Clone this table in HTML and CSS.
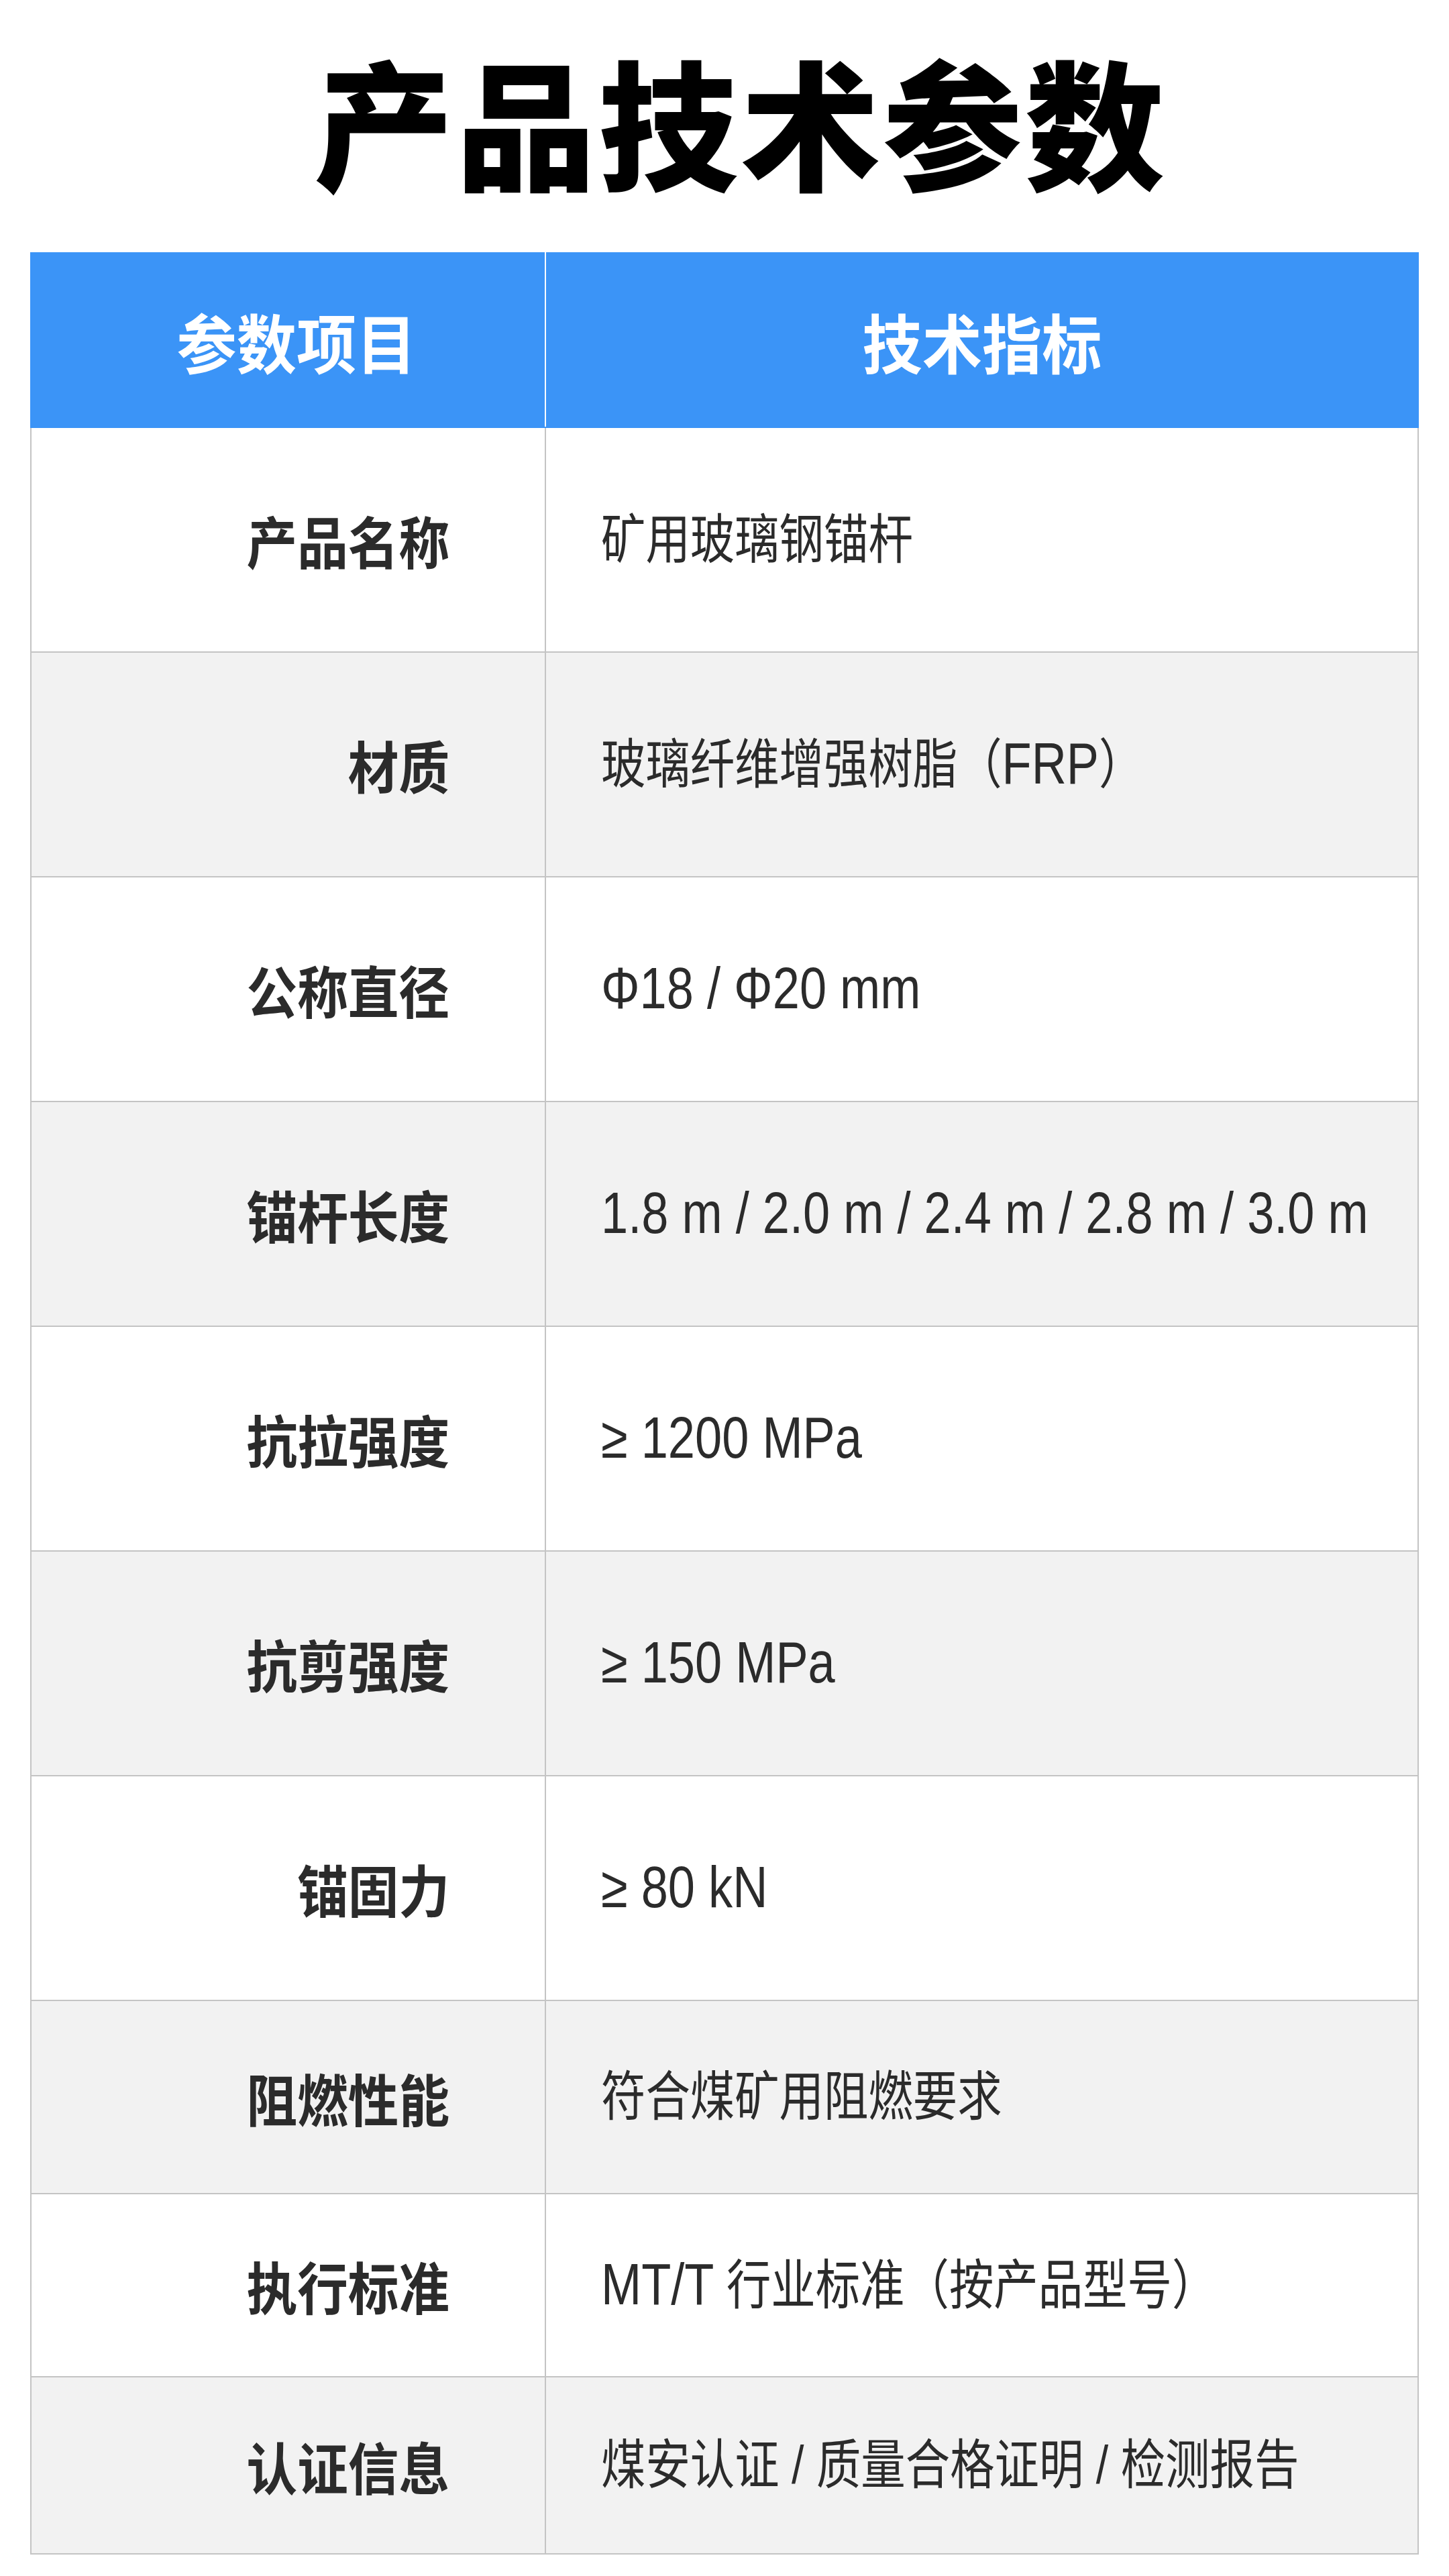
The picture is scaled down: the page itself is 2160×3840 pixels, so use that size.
FILE: index.html
```html
<!DOCTYPE html>
<html lang="zh-CN">
<head>
  <meta charset="UTF-8">
  <meta name="viewport" content="width=device-width, initial-scale=1.0">
  <title>产品技术参数</title>
  <link rel="stylesheet" href="styles.css">
</head>
<body>
  <h1 class="title">产品技术参数</h1>

  <table class="spec">
    <colgroup>
      <col class="col-name">
      <col class="col-value">
    </colgroup>
    <thead>
      <tr>
        <th><span class="txt">参数项目</span></th>
        <th><span class="txt">技术指标</span></th>
      </tr>
    </thead>
    <tbody>
      <tr>
        <td class="name"><span class="txt">产品名称</span></td>
        <td class="value"><span class="txt">矿用玻璃钢锚杆</span></td>
      </tr>
      <tr>
        <td class="name"><span class="txt">材质</span></td>
        <td class="value"><span class="txt">玻璃纤维增强树脂（<span class="num">FRP</span>）</span></td>
      </tr>
      <tr>
        <td class="name"><span class="txt">公称直径</span></td>
        <td class="value"><span class="txt"><span class="num">Φ18 / Φ20 mm</span></span></td>
      </tr>
      <tr>
        <td class="name"><span class="txt">锚杆长度</span></td>
        <td class="value"><span class="txt"><span class="num">1.8 m / 2.0 m / 2.4 m / 2.8 m / 3.0 m</span></span></td>
      </tr>
      <tr>
        <td class="name"><span class="txt">抗拉强度</span></td>
        <td class="value"><span class="txt"><span class="num">≥ 1200 MPa</span></span></td>
      </tr>
      <tr>
        <td class="name"><span class="txt">抗剪强度</span></td>
        <td class="value"><span class="txt"><span class="num">≥ 150 MPa</span></span></td>
      </tr>
      <tr>
        <td class="name"><span class="txt">锚固力</span></td>
        <td class="value"><span class="txt"><span class="num">≥ 80 kN</span></span></td>
      </tr>
      <tr class="row-md">
        <td class="name"><span class="txt">阻燃性能</span></td>
        <td class="value"><span class="txt">符合煤矿用阻燃要求</span></td>
      </tr>
      <tr class="row-sm">
        <td class="name"><span class="txt">执行标准</span></td>
        <td class="value"><span class="txt"><span class="num">MT/T</span> 行业标准（按产品型号）</span></td>
      </tr>
      <tr class="row-xs">
        <td class="name"><span class="txt">认证信息</span></td>
        <td class="value"><span class="txt">煤安认证 / 质量合格证明 / 检测报告</span></td>
      </tr>
    </tbody>
  </table>
</body>
</html>
```

FILE: styles.css
```css
body {
  font-family: "Noto Sans CJK SC", "Liberation Sans", sans-serif;
  background: #ffffff;
  color: #2b2b2b;
  margin: 0;
}
.title {
  margin: 0;
  padding: 74px 0 94px 48px;
  font-size: 208px;
  font-weight: 900;
  line-height: 1;
  letter-spacing: 4px;
  text-align: center;
  color: #000000;
}
.spec {
  width: 2070px;
  margin: 0 auto;
  border-collapse: collapse;
  table-layout: fixed;
}
.col-name {
  width: 767px;
}
.spec th {
  height: 258px;
  padding: 0;
  background: #3b94f7;
  border: 2px solid #3b94f7;
  color: #ffffff;
  font-size: 96px;
  font-weight: 700;
  text-align: center;
}
.spec th:first-child {
  padding-left: 24px;
  border-right-color: #ffffff;
}
.spec th .txt {
  transform-origin: center;
  transform: scaleX(0.93);
}
.spec td {
  padding: 0;
  border: 2px solid #c4c4c4;
  white-space: nowrap;
  overflow: hidden;
}
.spec tbody tr {
  height: 335px;
}
.spec tbody tr:nth-child(even) {
  background: #f2f2f2;
}
.spec tbody tr.row-md {
  height: 288px;
}
.spec tbody tr.row-sm {
  height: 273px;
}
.spec tbody tr.row-xs {
  height: 264px;
}
.txt {
  display: inline-block;
  line-height: 1;
}
.name {
  text-align: right;
  padding-right: 142px !important;
  font-size: 84px;
  font-weight: 700;
}
.name .txt {
  transform-origin: right center;
  transform: scaleX(0.9);
}
.value {
  text-align: left;
  padding-left: 82px !important;
  font-family: "Liberation Sans", "Noto Sans CJK SC", sans-serif;
  font-size: 80px;
  font-weight: 400;
}
.value .txt {
  transform-origin: left center;
  transform: scaleX(0.83);
}
.num {
  font-size: 87px;
  vertical-align: -1px;
}
```
